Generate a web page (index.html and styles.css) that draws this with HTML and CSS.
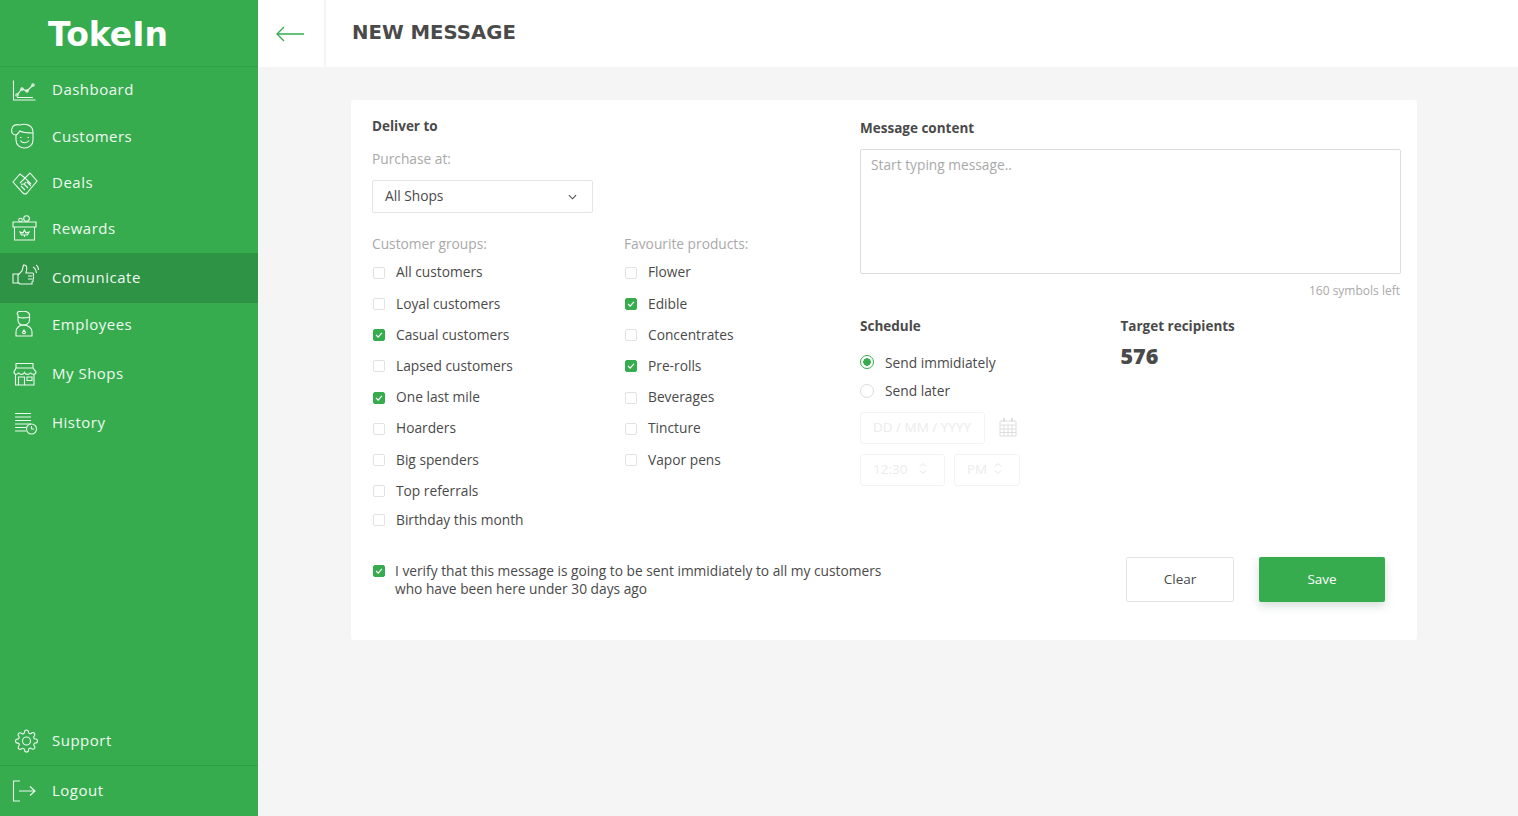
FILE: index.html
```html
<!DOCTYPE html>
<html lang="en">
<head>
  <meta charset="UTF-8" />
  <title>New message</title>
  <link rel="stylesheet" href="styles.css">
</head>
<body>
  <aside class="sidebar">
    <div class="logo">TokeIn</div>
    <nav class="nav">
      <a class="nav-item">
        <svg class="nav-icon" viewBox="0 0 28 28"><path d="M2.500 4.500V24H24.500M6 21.500H22"/><path d="M6 19L11 13L16 15L22 9"/><circle cx="6" cy="19" r="1.200"/><circle cx="11" cy="13" r="1.200"/><circle cx="16" cy="15" r="1.200"/><circle cx="22" cy="9" r="1.200"/></svg>
        <span class="nav-label">Dashboard</span>
      </a>
      <a class="nav-item">
        <svg class="nav-icon" viewBox="0 0 28 28"><path d="M5 12C2 12 0 10 .8 6C1.500 2 5 1 9 2C14 0 22 2 22 9V17C22 22 18 25 13.500 25C9 25 5 22 5 17Z"/><path d="M5 12C7 11 8 9 9 8C12 10 18 10 22 10"/><path d="M9.500 17.500C11 20.500 16 20.500 18 17.500M9 14.500H10.500M16.500 14.500H18"/></svg>
        <span class="nav-label">Customers</span>
      </a>
      <a class="nav-item">
        <svg class="nav-icon" viewBox="0 0 28 28"><path d="M2 13L9 5L14 9L19 4L26 12L16 24Q14 26 12 24Z"/><path d="M9 14L14 9L20 15M10 15C13 16 15 13 15 13M10 17L14 21M13 15L17 19M16 13L20 17"/></svg>
        <span class="nav-label">Deals</span>
      </a>
      <a class="nav-item">
        <svg class="nav-icon" viewBox="0 0 28 28"><path d="M2 7H25V12H2ZM3.500 12V25H23.500V12"/><circle cx="15.500" cy="3.500" r="2.800"/><circle cx="9.500" cy="5" r="1.800"/><path d="M13.500 15L15 18L18 17L16.500 20H10.500L9 17L12 18ZM13.500 20V22"/></svg>
        <span class="nav-label">Rewards</span>
      </a>
      <a class="nav-item nav-item-active">
        <svg class="nav-icon" viewBox="0 0 28 28"><path d="M2 10H7V19H2Z"/><path d="M7 11L11 7L12.500 1C16 .5 16.500 4 15 9H21.500C23 9 23 12 21.500 12C23 12 23 15 21.500 15C22.500 15 22.500 18 21 18V20H9L7 18.500"/><path d="M17 12H21M17 15H21"/><path d="M22 3C24 4 25 6 25.500 9M25 1C27 2 27.500 4 27.500 6"/></svg>
        <span class="nav-label">Comunicate</span>
      </a>
      <a class="nav-item">
        <svg class="nav-icon" viewBox="0 0 28 28"><path d="M7 4C5 2 7 0 10 .5C14-.5 18.500 1 18.500 4V9C18.500 12 16 14 12.500 14C9 14 7 12 7 9Z"/><path d="M7 6C10 7 15 7 18.500 6"/><path d="M5 25V21C5 17 8 14 12.500 14C17 14 21 17 21 21V25Z"/><path d="M13 19L14.500 21.500C14.500 23 11.500 23 11.500 21.500Z"/></svg>
        <span class="nav-label">Employees</span>
      </a>
      <a class="nav-item">
        <svg class="nav-icon" viewBox="0 0 28 28"><path d="M5 3.500H22V8H5ZM5 8L3 12C3 15 7 15 7.500 12.500C8 15 12.500 15 13.500 12.500C14.500 15 19 15 19.500 12.500C20 15 25 15 25 12L22 8"/><path d="M4.500 14.500V25H23V14.500M7.500 25V17H13.500V25M16 17H21V20.500H16Z"/></svg>
        <span class="nav-label">My Shops</span>
      </a>
      <a class="nav-item">
        <svg class="nav-icon" viewBox="0 0 28 28"><path d="M4 4.500H20M4 8H20M4 11.500H20M4 15H20M4 18.500H15M4 22H15"/><circle cx="20.500" cy="20" r="5"/><path d="M20.500 17V20H23"/></svg>
        <span class="nav-label">History</span>
      </a>
    </nav>
    <div class="nav-bottom">
      <a class="nav-item nav-item-support">
        <svg class="nav-icon" viewBox="-3.500 -2 28 28"><path d="M19.400 15a1.650 1.650 0 0 0 .33 1.820l.06.06a2 2 0 0 1 0 2.830 2 2 0 0 1-2.830 0l-.06-.06a1.650 1.650 0 0 0-1.820-.33 1.650 1.650 0 0 0-1 1.510V21a2 2 0 0 1-2 2 2 2 0 0 1-2-2v-.09A1.650 1.650 0 0 0 9 19.400a1.650 1.650 0 0 0-1.820.33l-.06.06a2 2 0 0 1-2.830 0 2 2 0 0 1 0-2.830l.06-.06a1.650 1.650 0 0 0 .33-1.820 1.650 1.650 0 0 0-1.510-1H3a2 2 0 0 1-2-2 2 2 0 0 1 2-2h.09A1.650 1.650 0 0 0 4.600 9a1.650 1.650 0 0 0-.33-1.820l-.06-.06a2 2 0 0 1 0-2.830 2 2 0 0 1 2.830 0l.06.06a1.650 1.650 0 0 0 1.820.33H9a1.650 1.650 0 0 0 1-1.510V3a2 2 0 0 1 2-2 2 2 0 0 1 2 2v.09a1.650 1.650 0 0 0 1 1.510 1.650 1.650 0 0 0 1.820-.33l.06-.06a2 2 0 0 1 2.830 0 2 2 0 0 1 0 2.830l-.06.06a1.650 1.650 0 0 0-.33 1.820V9a1.650 1.650 0 0 0 1.510 1H21a2 2 0 0 1 2 2 2 2 0 0 1-2 2h-.09a1.650 1.650 0 0 0-1.510 1z"/><circle cx="12" cy="12" r="4"/></svg>
        <span class="nav-label">Support</span>
      </a>
      <a class="nav-item nav-item-logout">
        <svg class="nav-icon" viewBox="0 0 28 28"><path d="M9 4H2.500V24H9"/><path d="M8 14H24M19 9.500L24 14L19 18.500"/></svg>
        <span class="nav-label">Logout</span>
      </a>
    </div>
  </aside>

  <main class="main">
    <header class="topbar">
      <a class="back">
        <svg class="back-icon" viewBox="0 0 30 16"><path d="M29 8H2M9 1L2 8L9 15"/></svg>
      </a>
      <h1 class="page-title">NEW MESSAGE</h1>
    </header>

    <section class="content">
      <div class="card">
        <div class="card-body">
          <div class="col-left">
            <h2 class="heading">Deliver to</h2>
            <div class="muted purchase-label">Purchase at:</div>
            <div class="select">
              <span class="select-value">All Shops</span>
              <svg class="select-arrow" viewBox="0 0 10 6"><path d="M1 1L5 5L9 1"/></svg>
            </div>
            <div class="groups">
              <div class="group-customers">
                <div class="muted group-label">Customer groups:</div>
                <label class="check"><span class="box"></span>All customers</label>
                <label class="check"><span class="box"></span>Loyal customers</label>
                <label class="check"><span class="box box-on"><svg viewBox="0 0 12 12"><path d="M2.500 6L5 8.500L9.500 3.500"/></svg></span>Casual customers</label>
                <label class="check"><span class="box"></span>Lapsed customers</label>
                <label class="check"><span class="box box-on"><svg viewBox="0 0 12 12"><path d="M2.500 6L5 8.500L9.500 3.500"/></svg></span>One last mile</label>
                <label class="check"><span class="box"></span>Hoarders</label>
                <label class="check"><span class="box"></span>Big spenders</label>
                <label class="check"><span class="box"></span>Top referrals</label>
                <label class="check check-last"><span class="box"></span>Birthday this month</label>
              </div>
              <div class="group-products">
                <div class="muted group-label">Favourite products:</div>
                <label class="check"><span class="box"></span>Flower</label>
                <label class="check"><span class="box box-on"><svg viewBox="0 0 12 12"><path d="M2.500 6L5 8.500L9.500 3.500"/></svg></span>Edible</label>
                <label class="check"><span class="box"></span>Concentrates</label>
                <label class="check"><span class="box box-on"><svg viewBox="0 0 12 12"><path d="M2.500 6L5 8.500L9.500 3.500"/></svg></span>Pre-rolls</label>
                <label class="check"><span class="box"></span>Beverages</label>
                <label class="check"><span class="box"></span>Tincture</label>
                <label class="check"><span class="box"></span>Vapor pens</label>
              </div>
            </div>
          </div>

          <div class="col-right">
            <h2 class="heading heading-message">Message content</h2>
            <div class="textarea">Start typing message..</div>
            <div class="symbols">160 symbols left</div>
            <div class="schedule-row">
              <div class="schedule">
                <h2 class="heading">Schedule</h2>
                <label class="radio radio-first"><span class="dot dot-on"></span>Send immidiately</label>
                <label class="radio"><span class="dot"></span>Send later</label>
                <div class="date-row">
                  <div class="field field-date">DD / MM / YYYY</div>
                  <svg class="calendar" viewBox="0 0 18 20"><path d="M1 4H17V19H1ZM1 8H17M1 12H17M1 15.500H17M5 8V19M9 8V19M13 8V19"/><path class="calendar-pegs" d="M5 1V5M13 1V5"/></svg>
                </div>
                <div class="time-row">
                  <div class="field field-time">12:30<svg class="updown" viewBox="0 0 8 13"><path d="M1 4.500L4 1.500L7 4.500M1 8.500L4 11.500L7 8.500"/></svg></div>
                  <div class="field field-ampm">PM<svg class="updown" viewBox="0 0 8 13"><path d="M1 4.500L4 1.500L7 4.500M1 8.500L4 11.500L7 8.500"/></svg></div>
                </div>
              </div>
              <div class="target">
                <h2 class="heading">Target recipients</h2>
                <div class="target-count">576</div>
              </div>
            </div>
          </div>
        </div>

        <div class="card-footer">
          <label class="verify"><span class="box box-on"><svg viewBox="0 0 12 12"><path d="M2.500 6L5 8.500L9.500 3.500"/></svg></span><span>I verify that this message is going to be sent immidiately to all my customers<br>who have been here under 30 days ago</span></label>
          <div class="actions">
            <button class="btn btn-clear">Clear</button>
            <button class="btn btn-save">Save</button>
          </div>
        </div>
      </div>
    </section>
  </main>
</body>
</html>
```

FILE: styles.css
```css
* {
  box-sizing: border-box;
}

body {
  margin: 0;
  height: 816px;
  display: flex;
  overflow: hidden;
  font-family: "Open Sans", sans-serif;
  font-size: 13.75px;
  color: #4a4a4a;
  background: #f5f5f5;
}

/* sidebar */
.sidebar {
  width: 258px;
  flex-shrink: 0;
  display: flex;
  flex-direction: column;
  background: #36ac4e;
  color: #fff;
}

.logo {
  height: 67px;
  padding-left: 48px;
  border-bottom: 1px solid #31a048;
  font-family: "DejaVu Sans", sans-serif;
  font-size: 33px;
  font-weight: 700;
  line-height: 69px;
}

.nav {
  flex: 1;
}

.nav-item {
  display: flex;
  align-items: center;
  gap: 13px;
  height: 46px;
  padding-left: 11px;
  font-size: 15px;
  letter-spacing: 0.5px;
  color: #f0f9f2;
}

.nav-label {
  padding-bottom: 2px;
}

.nav .nav-item:nth-child(2) { height: 48px; }
.nav .nav-item:nth-child(3) { height: 44px; }
.nav .nav-item:nth-child(4) { height: 48px; }
.nav .nav-item:nth-child(6) { height: 44px; }
.nav .nav-item:nth-child(7) { height: 54px; }
.nav .nav-item:nth-child(8) { height: 44px; }

.nav .nav-item-active {
  height: 50px;
  background: #2e9344;
}

.nav-icon {
  width: 28px;
  height: 28px;
  flex-shrink: 0;
  fill: none;
  stroke: #eef8f0;
  stroke-width: 1.1;
}

.nav-item-support {
  height: 49px;
}

.nav-item-logout {
  height: 51px;
  border-top: 1px solid #2f9d47;
}

/* main */
.main {
  flex: 1;
  display: flex;
  flex-direction: column;
}

.topbar {
  height: 67px;
  display: flex;
  align-items: center;
  background: #fff;
}

.back {
  width: 68px;
  height: 100%;
  padding-right: 2px;
  display: flex;
  align-items: center;
  justify-content: center;
  border-right: 2px solid #f5f5f5;
}

.back-icon {
  width: 30px;
  height: 16px;
  fill: none;
  stroke: #36ac4e;
  stroke-width: 1.3;
}

.page-title {
  margin: 0 0 3px 26px;
  font-family: "DejaVu Sans", sans-serif;
  font-size: 19.7px;
  font-weight: 700;
}

.content {
  padding: 33px 0 0 93px;
}

.card {
  width: 1066px;
  height: 540px;
  padding: 0 32px 0 21px;
  background: #fff;
  border-radius: 3px;
}

.card-body {
  height: 457px;
  display: flex;
}

.col-left {
  width: 488px;
  padding-top: 17px;
}

.col-right {
  width: 541px;
  margin-right: -16px;
  padding-top: 19px;
}

.heading {
  margin: 0;
  font-size: 13.5px;
  line-height: 18px;
  font-weight: 700;
}

.muted {
  color: #a9a9a9;
}

.purchase-label {
  margin-top: 15px;
  line-height: 18px;
}

.select {
  width: 221px;
  height: 33px;
  margin-top: 12px;
  padding: 0 15px 0 12px;
  display: flex;
  align-items: center;
  justify-content: space-between;
  border: 1px solid #e4e4e4;
  border-radius: 2px;
}

.select-value {
  padding-bottom: 2px;
}

.select-arrow {
  width: 9px;
  height: 6px;
  fill: none;
  stroke: #4a4a4a;
  stroke-width: 1.2;
}

.groups {
  display: flex;
  margin-top: 22px;
}

.group-customers {
  width: 252px;
}

.group-label {
  line-height: 18px;
  margin-bottom: 4.3px;
}

.check {
  height: 31.2px;
  padding-bottom: 2px;
  display: flex;
  align-items: center;
  gap: 11px;
  white-space: nowrap;
}

.check .box {
  margin: 2px 0 0 1px;
}

.check-last {
  height: 27px;
}

.box {
  width: 12px;
  height: 12px;
  flex-shrink: 0;
  border: 1px solid #e2e2e2;
  border-radius: 2px;
  background: #fff;
}

.box svg {
  display: block;
  width: 10px;
  height: 10px;
  fill: none;
  stroke: #fff;
  stroke-width: 1.5;
}

.box-on {
  border-color: #36ac4e;
  background: #36ac4e;
}

.textarea {
  height: 125px;
  margin-top: 12px;
  padding: 5px 10px;
  line-height: 20px;
  border: 1px solid #dcdcdc;
  border-radius: 2px;
  color: #a9a9a9;
}

.symbols {
  margin-top: 9px;
  padding-right: 1px;
  text-align: right;
  font-size: 12px;
  line-height: 16px;
  color: #a9a9a9;
}

.schedule-row {
  display: flex;
  margin-top: 18px;
}

.schedule {
  width: 260.5px;
}

.radio {
  height: 28.500px;
  display: flex;
  align-items: center;
  gap: 11px;
}

.radio-first {
  height: 28.9px;
  margin-top: 12.6px;
}

.dot {
  width: 14px;
  height: 14px;
  border: 1px solid #dcdcdc;
  border-radius: 50%;
}

.dot-on {
  border-color: #36ac4e;
  background: radial-gradient(circle, #36ac4e 0 3.500px, #fff 4px);
}

.date-row {
  display: flex;
  align-items: center;
  gap: 14px;
  margin-top: 7px;
}

.field {
  height: 32px;
  display: flex;
  align-items: center;
  justify-content: space-between;
  padding: 0 17px 2px 12px;
  border: 1px solid #f3f3f3;
  border-radius: 3px;
  font-size: 13.5px;
  color: #ececec;
  white-space: nowrap;
}

.field-date {
  width: 125px;
}

.calendar {
  width: 18px;
  height: 20px;
  margin-bottom: 2px;
  fill: none;
  stroke: #dedede;
  stroke-width: 1;
}

.calendar-pegs {
  stroke-width: 2;
}

.time-row {
  display: flex;
  gap: 9px;
  margin-top: 10px;
}

.field-time {
  width: 85px;
}

.field-ampm {
  width: 66px;
}

.updown {
  width: 8px;
  height: 13px;
  fill: none;
  stroke: #e4e4e4;
  stroke-width: 1;
}

.target-count {
  margin-top: 8px;
  font-size: 21.5px;
  font-weight: 800;
  line-height: 26px;
}

.card-footer {
  display: flex;
  justify-content: space-between;
}

.verify {
  display: flex;
  align-items: flex-start;
  gap: 10px;
  padding-top: 5px;
  line-height: 18px;
}

.verify .box {
  margin: 3px 0 0 1px;
}

.actions {
  display: flex;
  gap: 25px;
}

.btn {
  height: 45px;
  padding-bottom: 3px;
  font-family: "Open Sans", sans-serif;
  font-size: 13.5px;
  border-radius: 2px;
}

.btn-clear {
  width: 108px;
  border: 1px solid #e4e4e4;
  background: #fff;
  color: #4a4a4a;
}

.btn-save {
  width: 126px;
  border: none;
  background: #36ac4e;
  color: #fff;
  box-shadow: 0 4px 10px rgba(40, 90, 60, 0.2);
}
```
